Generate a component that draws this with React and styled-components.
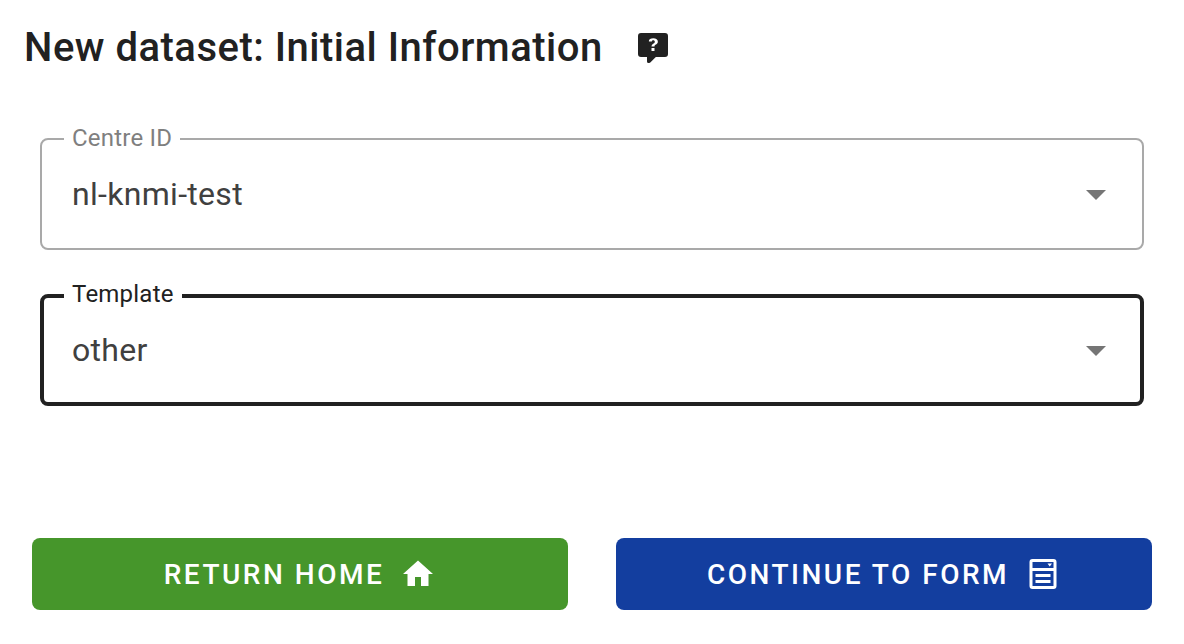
import React, { useState } from "react";
import styled, { createGlobalStyle } from "styled-components";

const GlobalStyle = createGlobalStyle`
  *, *::before, *::after { box-sizing: border-box; }
  body {
    margin: 0;
    background: #ffffff;
    color: #212121;
    font-family: Roboto, "Liberation Sans", sans-serif;
    -webkit-font-smoothing: antialiased;
  }
`;

const Page = styled.main`
  display: flex;
  flex-direction: column;
`;

const Header = styled.header`
  display: flex;
  align-items: center;
  gap: 32px;
  padding: 16px 24px;
`;

const Title = styled.h1`
  margin: 0;
  font-size: 40px;
  line-height: 64px;
  font-weight: 500;
  letter-spacing: 0.0125em;
`;

const HelpButton = styled.button`
  display: flex;
  padding: 0;
  border: 0;
  background: none;
  color: inherit;
  cursor: pointer;
`;

const Icon = styled.svg.attrs({ viewBox: "0 0 24 24", "aria-hidden": true })`
  display: block;
  flex: none;
  width: ${(p) => p.$size}px;
  height: ${(p) => p.$size}px;
  fill: currentColor;
`;

const Form = styled.form`
  display: flex;
  flex-direction: column;
`;

const Fields = styled.div`
  display: flex;
  flex-direction: column;
  gap: 32px;
  padding: 30px 40px 0;
`;

const Outline = styled.fieldset`
  min-width: 0;
  margin: 0;
  padding: 0 ${(p) => 24 - p.$line}px;
  border: ${(p) => p.$line}px solid ${(p) => (p.$active ? "#212121" : "#a9a9a9")};
  border-radius: 8px;
`;

const Legend = styled.legend`
  padding: 0 8px ${(p) => p.$line}px;
  color: ${(p) => (p.$active ? "#212121" : "#7f7f7f")};
  font-size: 24px;
  line-height: 24px;
  letter-spacing: 0.009375em;
`;

const Control = styled.div`
  display: grid;
  align-items: center;
  height: ${(p) => 100 - p.$line * 2}px;
  padding-bottom: 12px;

  > * { grid-area: 1 / 1; }
`;

const Select = styled.select`
  appearance: none;
  width: 100%;
  height: 48px;
  margin: 0;
  padding: 0 56px 0 8px;
  border: 0;
  outline: 0;
  background: transparent;
  color: #404040;
  font: inherit;
  font-size: 32px;
  letter-spacing: 0.009375em;
`;

const Arrow = styled(Icon)`
  justify-self: end;
  color: #757575;
  pointer-events: none;
`;

const Actions = styled.div`
  display: grid;
  grid-template-columns: 1fr 1fr;
  gap: 48px;
  padding: 132px 32px 32px;
`;

const Button = styled.button`
  display: flex;
  align-items: center;
  justify-content: center;
  gap: 16px;
  height: 72px;
  padding: 0 32px;
  border: 0;
  border-radius: 8px;
  background: ${(p) => p.$color};
  color: #ffffff;
  font: inherit;
  font-size: 28px;
  font-weight: 500;
  letter-spacing: 0.0893em;
  text-transform: uppercase;
  cursor: pointer;
`;

function SelectField({ id, label, options, active }) {
  const [value, setValue] = useState(options[0]);
  const line = active ? 4 : 2;
  return (
    <Outline $line={line} $active={active}>
      <Legend $line={line} $active={active}>
        <label htmlFor={id}>{label}</label>
      </Legend>
      <Control $line={line}>
        <Select id={id} value={value} onChange={(e) => setValue(e.target.value)}>
          {options.map((o) => (
            <option key={o}>{o}</option>
          ))}
        </Select>
        <Arrow $size={48}>
          <path d="M7,10L12,15L17,10H7Z" />
        </Arrow>
      </Control>
    </Outline>
  );
}

export default function App() {
  return (
    <>
      <GlobalStyle />
      <Page>
        <Header>
          <Title>New dataset: Initial Information</Title>
          <HelpButton type="button" aria-label="Help">
            <Icon $size={36}>
              <path
                fillRule="evenodd"
                d="M4,2A2,2 0 0,0 2,4V16A2,2 0 0,0 4,18H8V21A1,1 0 0,0 9,22H9.5C9.75,22 10,21.9 10.2,21.71L13.9,18H20A2,2 0 0,0 22,16V4A2,2 0 0,0 20,2H4M12.19,5.5C13.13,5.5 13.88,5.71 14.42,6.12C14.96,6.54 15.23,7.1 15.23,7.8C15.23,8.24 15.08,8.63 14.79,9C14.5,9.36 14.12,9.64 13.66,9.85C13.4,10 13.23,10.15 13.14,10.32C13.05,10.5 13,10.72 13,11H11C11,10.5 11.1,10.16 11.29,9.92C11.5,9.68 11.84,9.4 12.36,9.08C12.62,8.94 12.83,8.76 13,8.54C13.14,8.33 13.22,8.08 13.22,7.8C13.22,7.5 13.13,7.28 12.95,7.11C12.77,6.93 12.5,6.85 12.19,6.85C11.92,6.85 11.7,6.92 11.5,7.06C11.34,7.2 11.24,7.41 11.24,7.69H9.27C9.22,7 9.5,6.4 10.05,6.04C10.59,5.68 11.3,5.5 12.19,5.5M11,12H13V14H11V12Z"
              />
            </Icon>
          </HelpButton>
        </Header>
        <Form onSubmit={(e) => e.preventDefault()}>
          <Fields>
            <SelectField id="centre-id" label="Centre ID" options={["nl-knmi-test"]} />
            <SelectField id="template" label="Template" options={["other"]} active />
          </Fields>
          <Actions>
            <Button type="button" $color="#46962b">
              Return home
              <Icon $size={36}>
                <path d="M10,20V14H14V20H19V12H22L12,3L2,12H5V20H10Z" />
              </Icon>
            </Button>
            <Button type="submit" $color="#133e9f">
              Continue to form
              <Icon $size={36}>
                <path
                  fillRule="evenodd"
                  d="M5,2H19A2,2 0 0,1 21,4V20A2,2 0 0,1 19,22H5A2,2 0 0,1 3,20V4A2,2 0 0,1 5,2M5,4V8H19V4H5M5,10V20H19V10H5M15,5H18L16.5,7L15,5M7,12H17V14H7V12M7,16H17V18H7V16Z"
                />
              </Icon>
            </Button>
          </Actions>
        </Form>
      </Page>
    </>
  );
}
